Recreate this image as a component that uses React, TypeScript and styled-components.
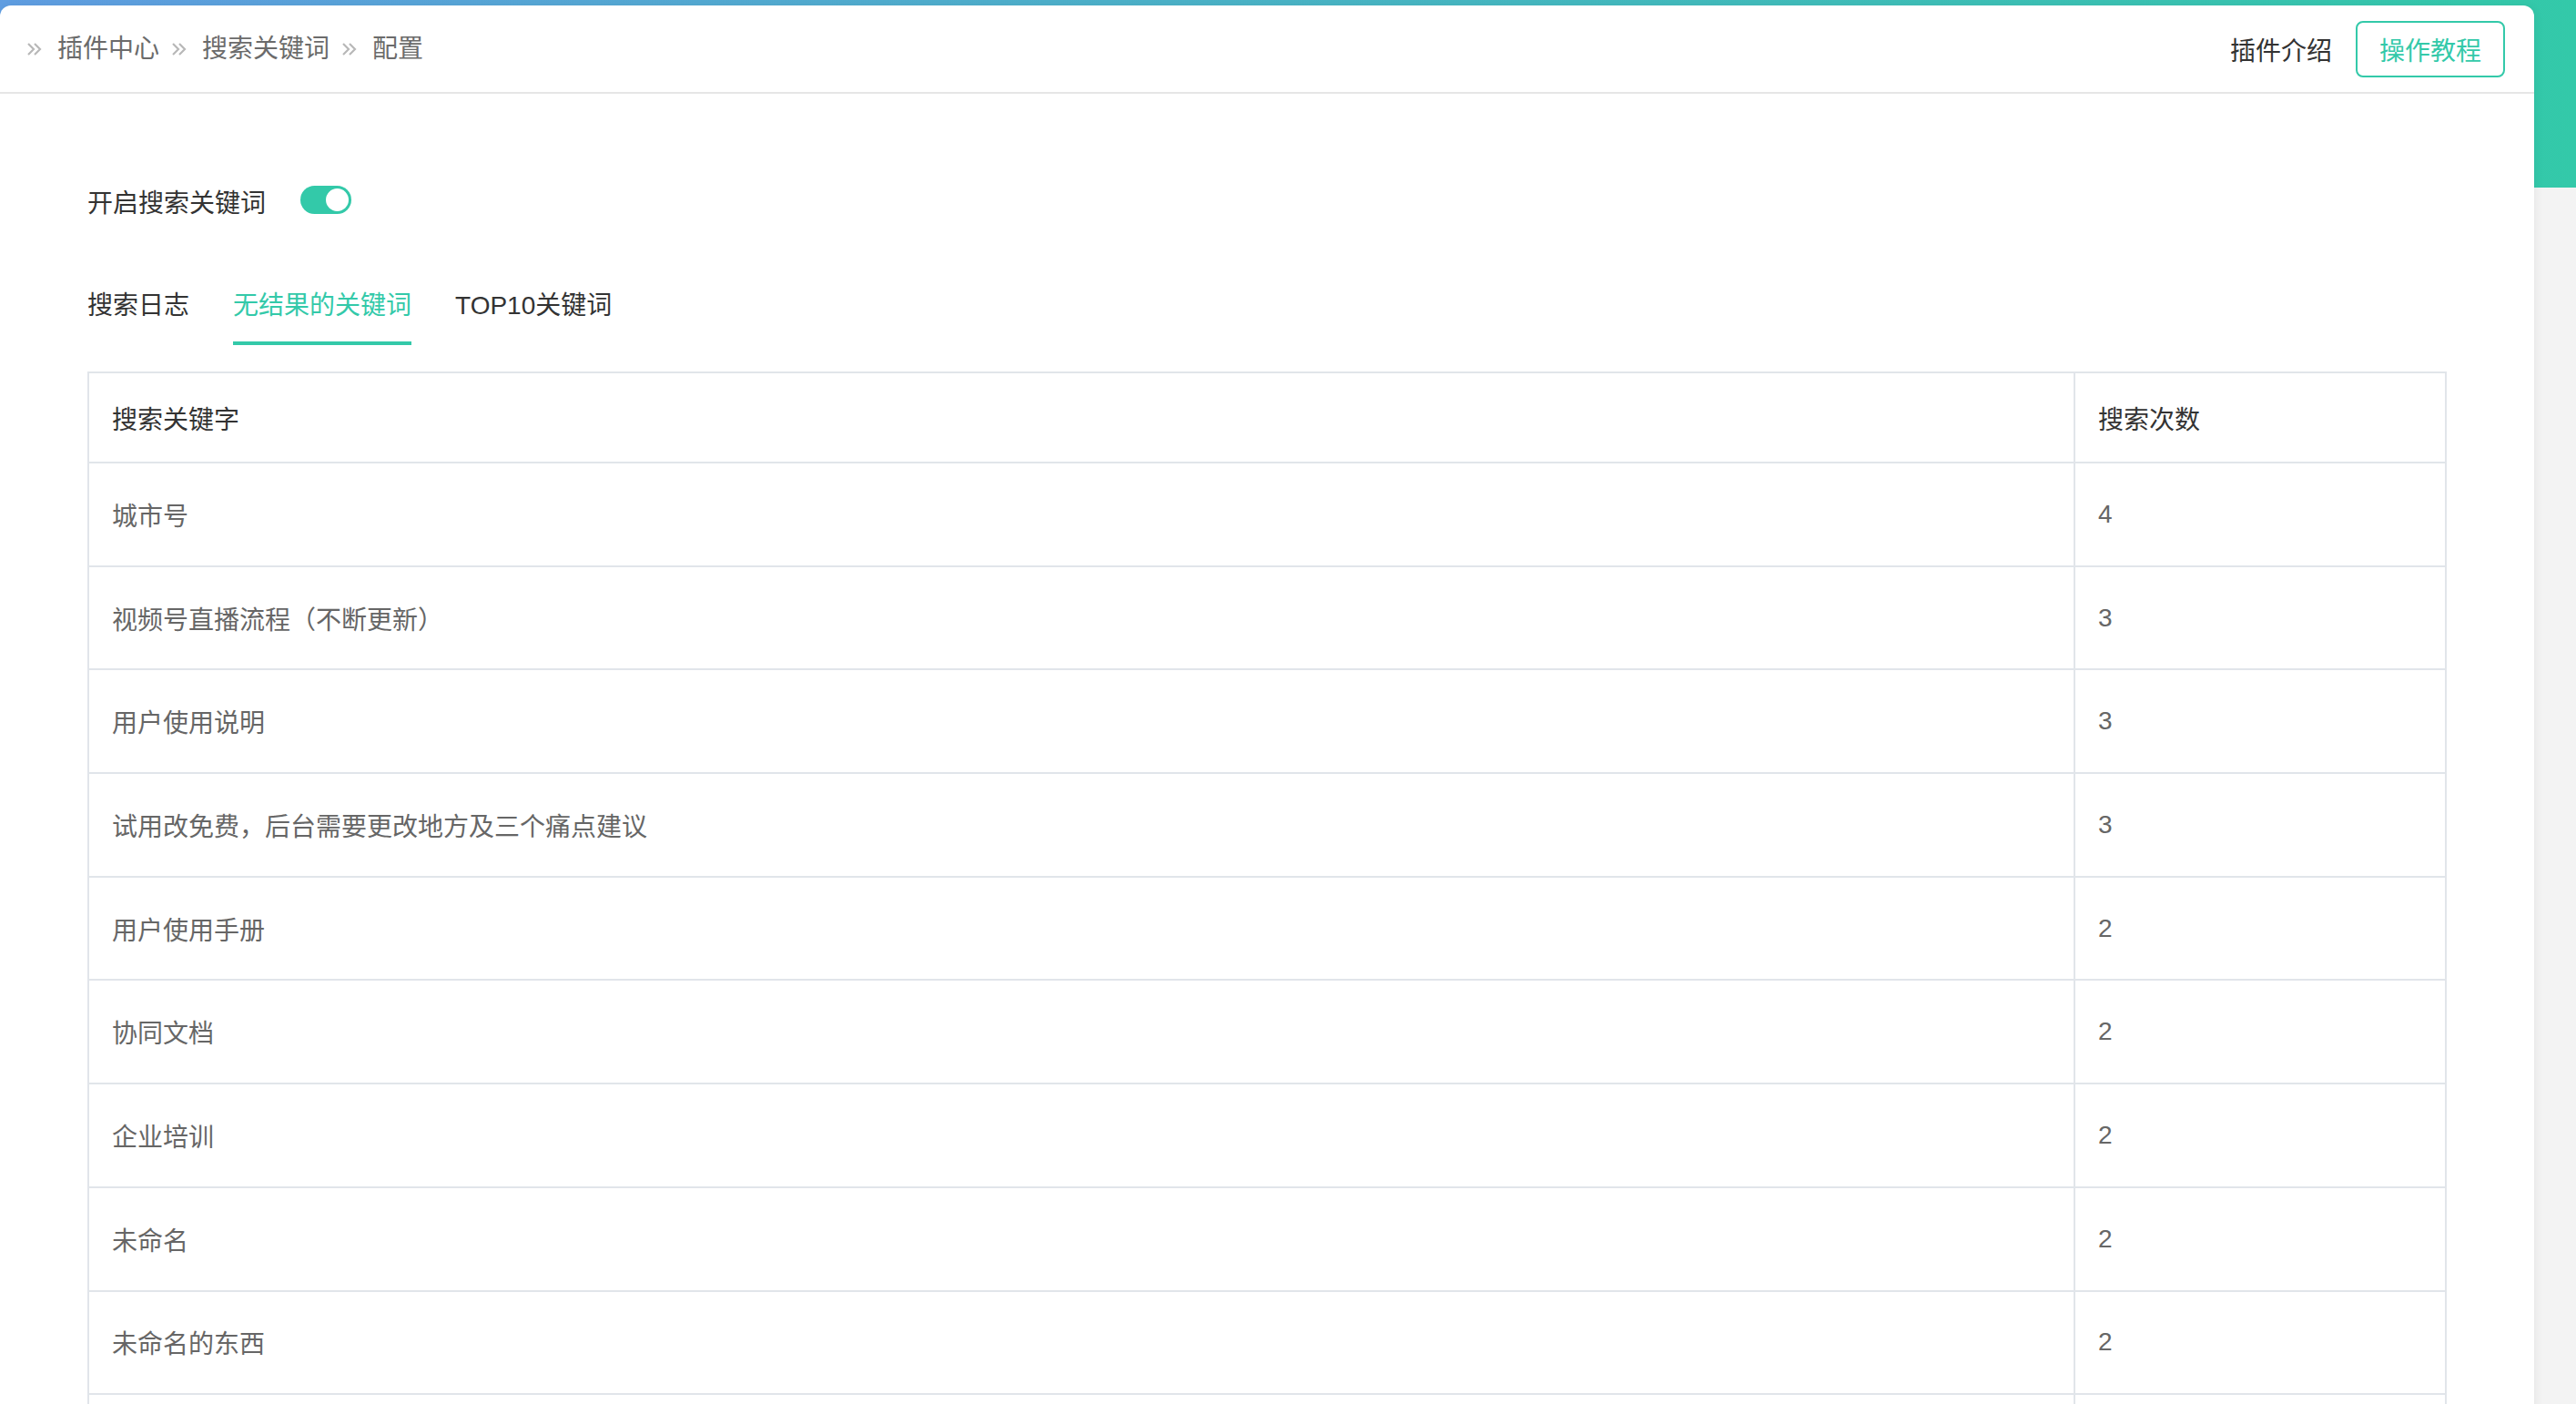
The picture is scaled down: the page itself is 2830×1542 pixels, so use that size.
import React from "react";
import styled, { createGlobalStyle } from "styled-components";

const teal = "#33c9a9";

const rows = [
  { word: "城市号", count: 4 },
  { word: "视频号直播流程（不断更新）", count: 3 },
  { word: "用户使用说明", count: 3 },
  { word: "试用改免费，后台需要更改地方及三个痛点建议", count: 3 },
  { word: "用户使用手册", count: 2 },
  { word: "协同文档", count: 2 },
  { word: "企业培训", count: 2 },
  { word: "未命名", count: 2 },
  { word: "未命名的东西", count: 2 },
  { word: "产品需求文档", count: 1 },
];

const crumbs = ["插件中心", "搜索关键词", "配置"];
const tabs = ["搜索日志", "无结果的关键词", "TOP10关键词"];

const Chevrons: React.FC = () => (
  <svg width="18" height="16" viewBox="0 0 18 16">
    <polyline points="2,2 8,8 2,14" fill="none" stroke="#b8b8b8" strokeWidth="2.2" />
    <polyline points="9,2 15,8 9,14" fill="none" stroke="#b8b8b8" strokeWidth="2.2" />
  </svg>
);

const App: React.FC = () => {
  const [on, setOn] = React.useState(true);
  const [active, setActive] = React.useState(1);

  return (
    <Page>
      <GlobalStyle />
      <Card>
        <Header>
          <Breadcrumb>
            {crumbs.map((c) => (
              <Crumb key={c}>
                <Chevrons />
                <span>{c}</span>
              </Crumb>
            ))}
          </Breadcrumb>
          <HeaderRight>
            <IntroLink>插件介绍</IntroLink>
            <GuideButton>操作教程</GuideButton>
          </HeaderRight>
        </Header>
        <Content>
          <ToggleRow>
            <Label>开启搜索关键词</Label>
            <Switch on={on} onClick={() => setOn(!on)}>
              <Knob on={on} />
            </Switch>
          </ToggleRow>
          <Tabs>
            {tabs.map((t, i) => (
              <Tab key={t} active={active === i} onClick={() => setActive(i)}>
                {t}
              </Tab>
            ))}
          </Tabs>
          <Table>
            <thead>
              <tr>
                <Th>搜索关键字</Th>
                <Th narrow>搜索次数</Th>
              </tr>
            </thead>
            <tbody>
              {rows.map((r) => (
                <tr key={r.word}>
                  <Td>{r.word}</Td>
                  <Td>{r.count}</Td>
                </tr>
              ))}
            </tbody>
          </Table>
        </Content>
      </Card>
    </Page>
  );
};

export default App;

const GlobalStyle = createGlobalStyle`
  html, body {
    margin: 0;
    padding: 0;
  }
  body {
    font-family: "Liberation Sans", "Noto Sans CJK SC", sans-serif;
    background: #f3f3f3;
  }
`;

const Page = styled.div`
  min-height: 100vh;
  background: linear-gradient(to right, #5f9de1, #33c9a9) top left / 100% 206px
      no-repeat,
    #f3f3f3;
  padding-top: 6px;
  box-sizing: border-box;
`;

const Card = styled.div`
  margin-right: 46px;
  background: #fff;
  border-radius: 12px 12px 0 0;
  min-height: 1600px;
  box-shadow: 2px 0 10px rgba(0, 0, 0, 0.05);
`;

const Header = styled.div`
  height: 95px;
  border-bottom: 2px solid #e6e6e6;
  display: flex;
  align-items: center;
  justify-content: space-between;
  padding: 0 32px 0 29px;
`;

const Breadcrumb = styled.div`
  display: flex;
  align-items: center;
  gap: 13px;
  font-size: 28px;
  color: #6b6b6b;
`;

const Crumb = styled.div`
  display: flex;
  align-items: center;
  gap: 16px;
  line-height: 40px;
`;

const HeaderRight = styled.div`
  display: flex;
  align-items: center;
  gap: 26px;
`;

const IntroLink = styled.span`
  font-size: 28px;
  color: #333;
  cursor: pointer;
`;

const GuideButton = styled.button`
  width: 164px;
  height: 62px;
  border: 2px solid ${teal};
  border-radius: 8px;
  background: #fff;
  color: ${teal};
  font-size: 28px;
  font-family: inherit;
  cursor: pointer;
  padding: 0;
`;

const Content = styled.div`
  padding: 101px 96px 0 96px;
`;

const ToggleRow = styled.div`
  display: flex;
  align-items: center;
  gap: 38px;
  height: 40px;
`;

const Label = styled.span`
  font-size: 28px;
  color: #333;
  line-height: 40px;
`;

const Switch = styled.div<{ on: boolean }>`
  width: 56px;
  height: 31px;
  border-radius: 16px;
  background: ${(p) => (p.on ? teal : "#dcdfe6")};
  display: flex;
  align-items: center;
  justify-content: ${(p) => (p.on ? "flex-end" : "flex-start")};
  padding: 0 3px;
  box-sizing: border-box;
  margin-top: -9px;
  cursor: pointer;
`;

const Knob = styled.div<{ on: boolean }>`
  width: 25px;
  height: 25px;
  border-radius: 50%;
  background: #fff;
`;

const Tabs = styled.div`
  display: flex;
  gap: 48px;
  margin-top: 72px;
`;

const Tab = styled.div<{ active: boolean }>`
  font-size: 28px;
  line-height: 40px;
  padding-bottom: 19px;
  color: ${(p) => (p.active ? teal : "#333")};
  border-bottom: 4px solid ${(p) => (p.active ? teal : "transparent")};
  cursor: pointer;
`;

const Table = styled.table`
  margin-top: 29px;
  width: 100%;
  border-collapse: collapse;
  border: 2px solid #e1e5ea;
`;

const Th = styled.th<{ narrow?: boolean }>`
  width: ${(p) => (p.narrow ? "356px" : "auto")};
  height: 97px;
  padding: 0 25px;
  border: 2px solid #e1e5ea;
  text-align: left;
  font-weight: normal;
  font-size: 28px;
  color: #333;
`;

const Td = styled.td`
  height: 111.7px;
  padding: 0 25px;
  border: 2px solid #e1e5ea;
  font-size: 28px;
  color: #666;
`;
